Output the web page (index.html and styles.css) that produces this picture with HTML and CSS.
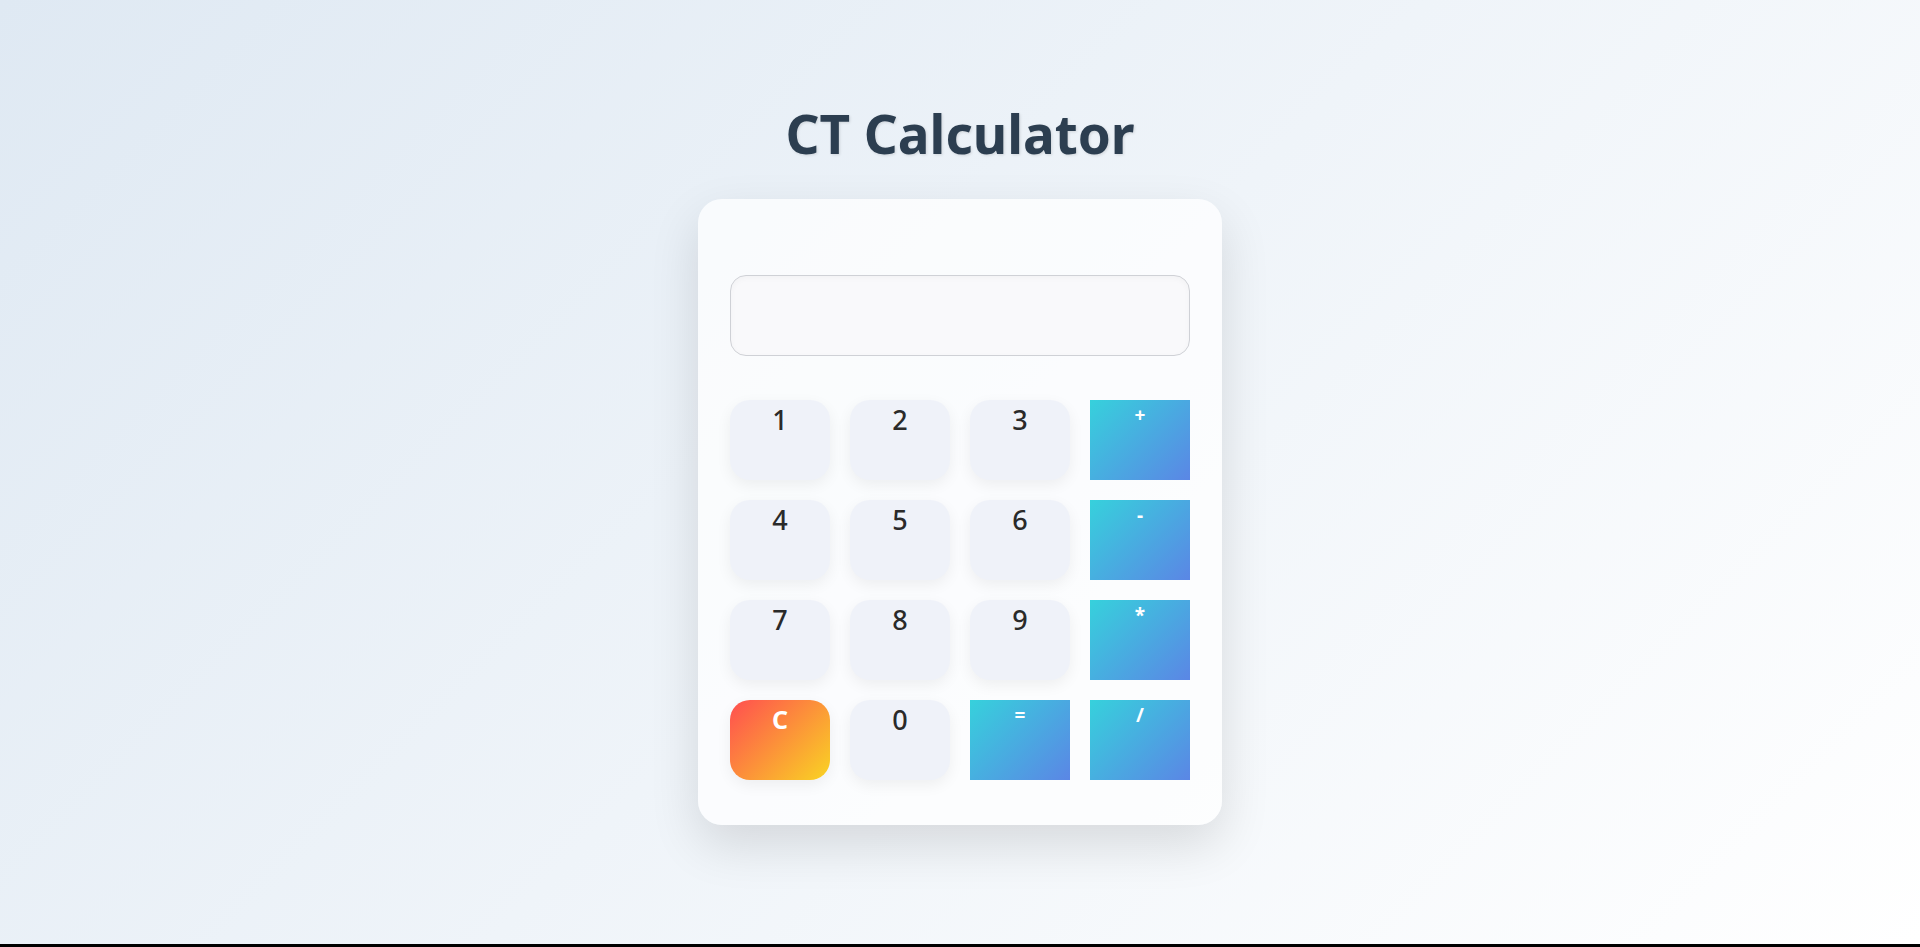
FILE: index.html
```html
<!DOCTYPE html>
<html lang="en">
<head>
<meta charset="utf-8">
<title>CT Calculator</title>
<link rel="stylesheet" href="styles.css">
</head>
<body>
<main class="page">
  <h1 class="title">CT Calculator</h1>
  <div class="calculator">
    <div class="display"></div>
    <div class="keys">
      <div class="key num">1</div>
      <div class="key num">2</div>
      <div class="key num">3</div>
      <div class="key op">+</div>
      <div class="key num">4</div>
      <div class="key num">5</div>
      <div class="key num">6</div>
      <div class="key op">-</div>
      <div class="key num">7</div>
      <div class="key num">8</div>
      <div class="key num">9</div>
      <div class="key op">*</div>
      <div class="key clear">C</div>
      <div class="key num">0</div>
      <div class="key op">=</div>
      <div class="key op">/</div>
    </div>
  </div>
</main>
</body>
</html>
```

FILE: styles.css
```css
html {
  background: #000;
}
body {
  margin: 0;
  height: 944px;
  background: linear-gradient(135deg, #dfe9f3 0%, #ffffff 100%);
  font-family: "Noto Sans", "Open Sans", sans-serif;
  overflow: hidden;
}
.page {
  display: flex;
  flex-direction: column;
  align-items: center;
  padding-top: 107px;
}
.title {
  margin: 0 0 39px;
  font-size: 53px;
  line-height: 1;
  font-weight: 700;
  color: #2c3e50;
  text-shadow: 1px 1px 3px rgba(0, 0, 0, 0.12);
}
.calculator {
  width: 460px;
  padding: 76px 32px 45px;
  background: rgba(255, 255, 255, 0.72);
  border-radius: 24px;
  box-shadow: 0 20px 50px rgba(0, 0, 0, 0.12);
}
.display {
  height: 79px;
  border: 1px solid #cfd1d6;
  border-radius: 16px;
  background: #f9f9fb;
  box-shadow: inset 0 2px 6px rgba(0, 0, 0, 0.03);
  margin-bottom: 44px;
}
.keys {
  display: grid;
  grid-template-columns: repeat(4, 100px);
  grid-auto-rows: 80px;
  gap: 20px;
}
.key {
  text-align: center;
  box-sizing: border-box;
}
.num {
  background: #eff2f9;
  border-radius: 20px;
  color: #2a2a2a;
  font-size: 27px;
  font-weight: 500;
  line-height: 1;
  padding-top: 6px;
  box-shadow: 0 5px 15px rgba(0, 0, 0, 0.06);
}
.op {
  background: linear-gradient(135deg, #36d1dc, #5b86e5);
  color: #fff;
  font-size: 19px;
  font-weight: 700;
  line-height: 1;
  padding-top: 6px;
}
.clear {
  background: linear-gradient(135deg, #ff4e50, #f9d423);
  border-radius: 20px;
  color: #fff;
  font-size: 25px;
  font-weight: 700;
  line-height: 1;
  padding-top: 7px;
  box-shadow: 0 5px 15px rgba(0, 0, 0, 0.06);
}
```
